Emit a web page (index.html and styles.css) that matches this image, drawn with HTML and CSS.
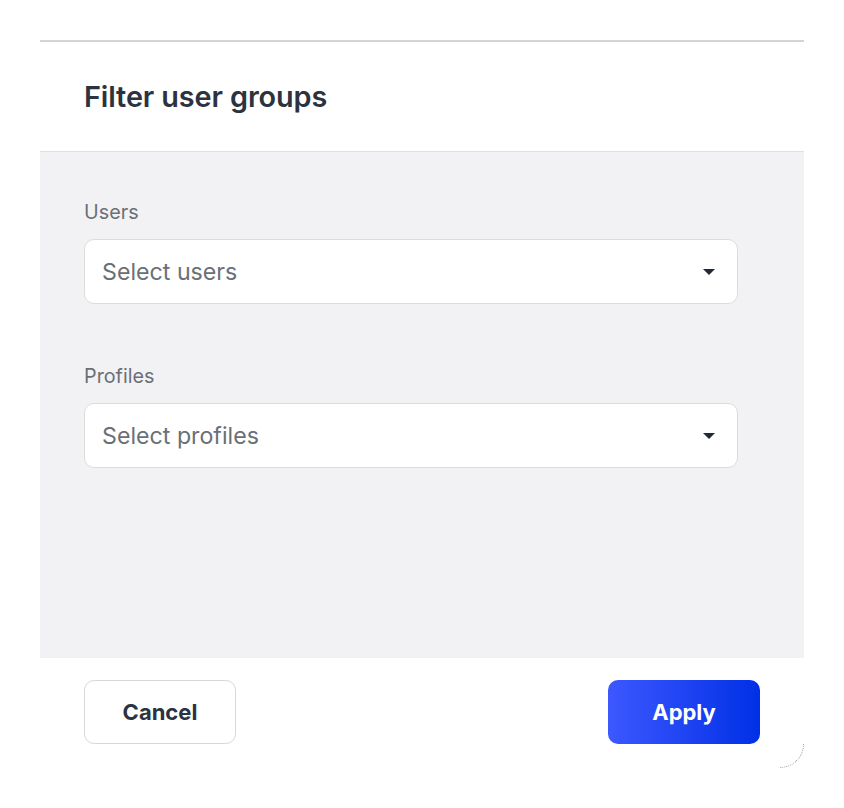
FILE: index.html
```html
<!DOCTYPE html>
<html>
<head>
<meta charset="utf-8">
<link rel="stylesheet" href="styles.css">
</head>
<body>
<div class="panel">
  <div class="header">
    <h1 class="title">Filter user groups</h1>
  </div>
  <div class="content">
    <div class="field">
      <label class="label">Users</label>
      <div class="select">
        <span class="placeholder">Select users</span>
        <svg class="caret" width="12" height="6" viewBox="0 0 12 6"><path d="M0 0H12L6 6Z" fill="#1f2937"/></svg>
      </div>
    </div>
    <div class="field">
      <label class="label">Profiles</label>
      <div class="select">
        <span class="placeholder">Select profiles</span>
        <svg class="caret" width="12" height="6" viewBox="0 0 12 6"><path d="M0 0H12L6 6Z" fill="#1f2937"/></svg>
      </div>
    </div>
  </div>
  <div class="footer">
    <button class="btn btn-cancel">Cancel</button>
    <button class="btn btn-apply">Apply</button>
  </div>
</div>
</body>
</html>
```
FILE: styles.css
```css
html, body {
  margin: 0;
  padding: 0;
  background: #ffffff;
  font-family: Inter, "Noto Sans", sans-serif;
}
.panel {
  margin: 40px 40px 0 40px;
  width: 764px;
  border-top: 2px solid #d4d4d6;
  background: #fff;
}
.header {
  height: 109px;
  display: flex;
  align-items: center;
  padding: 0 44px;
  border-bottom: 1px solid #e0e0e2;
}
.title {
  margin: 0;
  font-size: 28.8px;
  font-weight: 600;
  color: #2b3340;
  letter-spacing: -0.1px;
}
.content {
  background: #f2f2f4;
  height: 506px;
  padding: 48px 66px 0 44px;
  box-sizing: border-box;
  display: flex;
  flex-direction: column;
  gap: 60px;
}
.field {
  display: flex;
  flex-direction: column;
  gap: 15px;
}
.label {
  font-size: 19.8px;
  line-height: 24px;
  color: #6b6f76;
}
.select {
  height: 65px;
  box-sizing: border-box;
  background: #fff;
  border: 1px solid #dcdcde;
  border-radius: 10px;
  display: flex;
  align-items: center;
  justify-content: space-between;
  padding: 0 17px 0 17px;
}
.placeholder {
  font-size: 23.2px;
  color: #6b6f76;
}
.caret {
  margin-top: 1px;
  margin-right: 5px;
}
.footer {
  position: relative;
  height: 110px;
  box-sizing: border-box;
  padding: 22px 44px 24px 44px;
  display: flex;
  justify-content: space-between;
  align-items: flex-start;
  border-bottom-right-radius: 24px;
}
.footer::after {
  content: "";
  position: absolute;
  right: 0;
  bottom: 0;
  width: 24px;
  height: 24px;
  box-sizing: border-box;
  border-right: 1px dotted #a89e94;
  border-bottom: 1px dotted #a89e94;
  border-bottom-right-radius: 24px;
}
.btn {
  width: 152px;
  height: 64px;
  border-radius: 10px;
  font-family: Inter, "Noto Sans", sans-serif;
  font-size: 22px;
  font-weight: 700;
  cursor: pointer;
}
.btn-cancel {
  background: #fff;
  border: 1px solid #d8d8da;
  color: #2b3340;
}
.btn-apply {
  border: none;
  color: #fff;
  background: linear-gradient(90deg, #3d58ff 0%, #0030e6 100%);
}
```
